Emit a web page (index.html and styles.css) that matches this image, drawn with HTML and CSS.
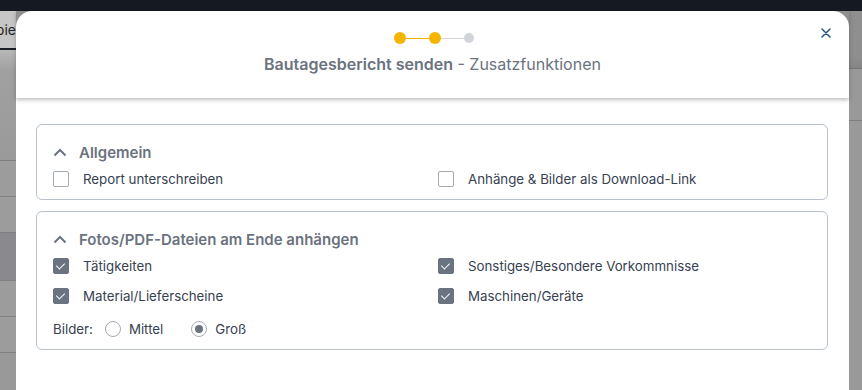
FILE: index.html
```html
<!DOCTYPE html>
<html lang="de">
<head>
  <meta charset="UTF-8" />
  <meta name="viewport" content="width=device-width, initial-scale=1.0" />
  <title>Bautagesbericht senden</title>
  <link rel="stylesheet" href="styles.css">
</head>
<body>
  <div class="topbar"></div>
  <div class="page">
    <div class="page-tabs">
      <div class="page-tab">Kopie</div>
    </div>
    <div class="page-main">
      <div class="page-left">
        <div class="page-head"></div>
        <div class="page-row"></div>
        <div class="page-row"></div>
        <div class="page-row dark"></div>
        <div class="page-row"></div>
        <div class="page-row"></div>
      </div>
      <div class="page-right">
        <div class="page-head short"></div>
      </div>
    </div>
  </div>

  <div class="modal">
    <div class="modal-header">
      <div class="stepper">
        <span class="dot done"></span>
        <span class="line done"></span>
        <span class="dot done"></span>
        <span class="line"></span>
        <span class="dot small"></span>
      </div>
      <h2 class="modal-title"><b>Bautagesbericht senden</b> - Zusatzfunktionen</h2>
      <button class="close-btn" aria-label="Schließen">
        <svg width="10" height="10" viewBox="0 0 10 10"><path d="M1 1L9 9M9 1L1 9" stroke="currentColor" stroke-width="1.5" stroke-linecap="round"/></svg>
      </button>
    </div>

    <div class="modal-body">
      <section class="panel">
        <h3 class="panel-title">
          <svg class="chevron" width="14" height="9" viewBox="0 0 14 9"><path d="M1.5 7.5L7 2L12.5 7.5" fill="none" stroke="currentColor" stroke-width="2"/></svg>
          Allgemein
        </h3>
        <div class="options">
          <label class="option"><span class="box"></span>Report unterschreiben</label>
          <label class="option"><span class="box"></span>Anhänge &amp; Bilder als Download-Link</label>
        </div>
      </section>

      <section class="panel">
        <h3 class="panel-title">
          <svg class="chevron" width="14" height="9" viewBox="0 0 14 9"><path d="M1.5 7.5L7 2L12.5 7.5" fill="none" stroke="currentColor" stroke-width="2"/></svg>
          Fotos/PDF-Dateien am Ende anhängen
        </h3>
        <div class="options">
          <label class="option"><span class="box checked"></span>Tätigkeiten</label>
          <label class="option"><span class="box checked"></span>Sonstiges/Besondere Vorkommnisse</label>
          <label class="option"><span class="box checked"></span>Material/Lieferscheine</label>
          <label class="option"><span class="box checked"></span>Maschinen/Geräte</label>
        </div>
        <div class="size-row">
          <span class="size-label">Bilder:</span>
          <label class="radio"><span class="circle"></span>Mittel</label>
          <label class="radio"><span class="circle on"></span>Groß</label>
        </div>
      </section>
    </div>
  </div>
</body>
</html>
```

FILE: styles.css
```css
body {
  margin: 0;
  height: 390px;
  overflow: hidden;
  font-family: Inter, "Noto Sans", sans-serif;
  background: #999;
}
.topbar {
  height: 11px;
  background: #141922;
}
.page-tabs {
  height: 57px;
  background: linear-gradient(#8f8f8f, #8e8e8e 46px, #858585);
  border-bottom: 1px solid #777;
  display: flex;
}
.page-tab {
  width: 16px;
  height: 37px;
  line-height: 37px;
  background: #c6c6c6;
  border-bottom: 2px solid #1b1e24;
  font-size: 14px;
  color: #222;
  direction: rtl;
  overflow: hidden;
  white-space: nowrap;
}
.page-main {
  display: flex;
  margin-top: -19px;
}
.page-left {
  width: 300px;
}
.page-right {
  flex: 1;
  padding-top: 19px;
}
.page-head {
  height: 110px;
  background: linear-gradient(#b8b8b8, #a0a0a0 20px, #9a9a9a);
  border-bottom: 1px solid #7d7d7d;
}
.page-head.short {
  height: 51px;
  background: #999;
}
.page-row {
  height: 35px;
  background: #9c9c9c;
  border-bottom: 1px solid #7f7f7f;
}
.page-row.dark {
  height: 47px;
  background: #8a8a8e;
}

.modal {
  position: absolute;
  left: 16px;
  top: 11px;
  bottom: 0;
  width: 833px;
  background: #fff;
  border-radius: 16px 16px 0 0;
}
.modal-header {
  position: relative;
  height: 87px;
  box-shadow: 0 2px 4px rgba(0, 0, 0, 0.25);
  display: flex;
  flex-direction: column;
  align-items: center;
}
.stepper {
  display: flex;
  align-items: center;
  margin-top: 21px;
  margin-left: 2px;
}
.dot {
  width: 12px;
  height: 12px;
  border-radius: 50%;
  background: #f5b400;
}
.dot.small {
  width: 10px;
  height: 10px;
  background: #d1d5db;
}
.line {
  width: 23px;
  height: 1px;
  background: #d1d5db;
}
.line.done {
  background: #f5b400;
}
.modal-title {
  margin: 10px 0 0;
  font-size: 16px;
  font-weight: 400;
  color: #6b7280;
  line-height: 20px;
}
.modal-title b {
  font-weight: 600;
}
.close-btn {
  position: absolute;
  right: 18px;
  top: 17px;
  border: none;
  background: none;
  padding: 0;
  width: 10px;
  height: 10px;
  color: #1f5580;
  cursor: pointer;
}
.close-btn svg {
  display: block;
}

.modal-body {
  padding: 26px 21px 0 20px;
  display: flex;
  flex-direction: column;
  gap: 11px;
}
.panel {
  border: 1px solid #b9c1cc;
  border-radius: 6px;
  padding: 16px 16px 10px;
}
.panel-title {
  margin: 0 0 4px;
  display: flex;
  align-items: center;
  gap: 12px;
  font-size: 15px;
  font-weight: 600;
  line-height: 24px;
  color: #6b7280;
}
.chevron {
  color: #6b7280;
  margin-top: -1px;
}
.options {
  display: grid;
  grid-template-columns: 1fr 1fr;
  column-gap: 12px;
  row-gap: 10px;
}
.option, .radio {
  display: flex;
  align-items: center;
  height: 20px;
  font-size: 13.3px;
  color: #374151;
}
.box {
  width: 14px;
  height: 14px;
  border: 1px solid #a5acb6;
  border-radius: 2px;
  margin-right: 14px;
  position: relative;
}
.box.checked {
  background: #6b7280;
  border-color: #6b7280;
}
.box.checked::after {
  content: "";
  position: absolute;
  left: 4px;
  top: 2px;
  width: 4px;
  height: 7px;
  border: solid #fff;
  border-width: 0 1.5px 1.5px 0;
  transform: rotate(45deg);
}
.size-row {
  display: flex;
  align-items: center;
  margin-top: 13px;
  height: 20px;
  font-size: 13.3px;
  color: #374151;
}
.size-label {
  margin-right: 12px;
}
.radio {
  margin-right: 28px;
}
.circle {
  width: 16px;
  height: 16px;
  box-sizing: border-box;
  border: 1px solid #a5acb6;
  border-radius: 50%;
  margin-right: 8px;
  position: relative;
}
.circle.on::after {
  content: "";
  position: absolute;
  left: 3px;
  top: 3px;
  width: 8px;
  height: 8px;
  border-radius: 50%;
  background: #6b7280;
}
```
